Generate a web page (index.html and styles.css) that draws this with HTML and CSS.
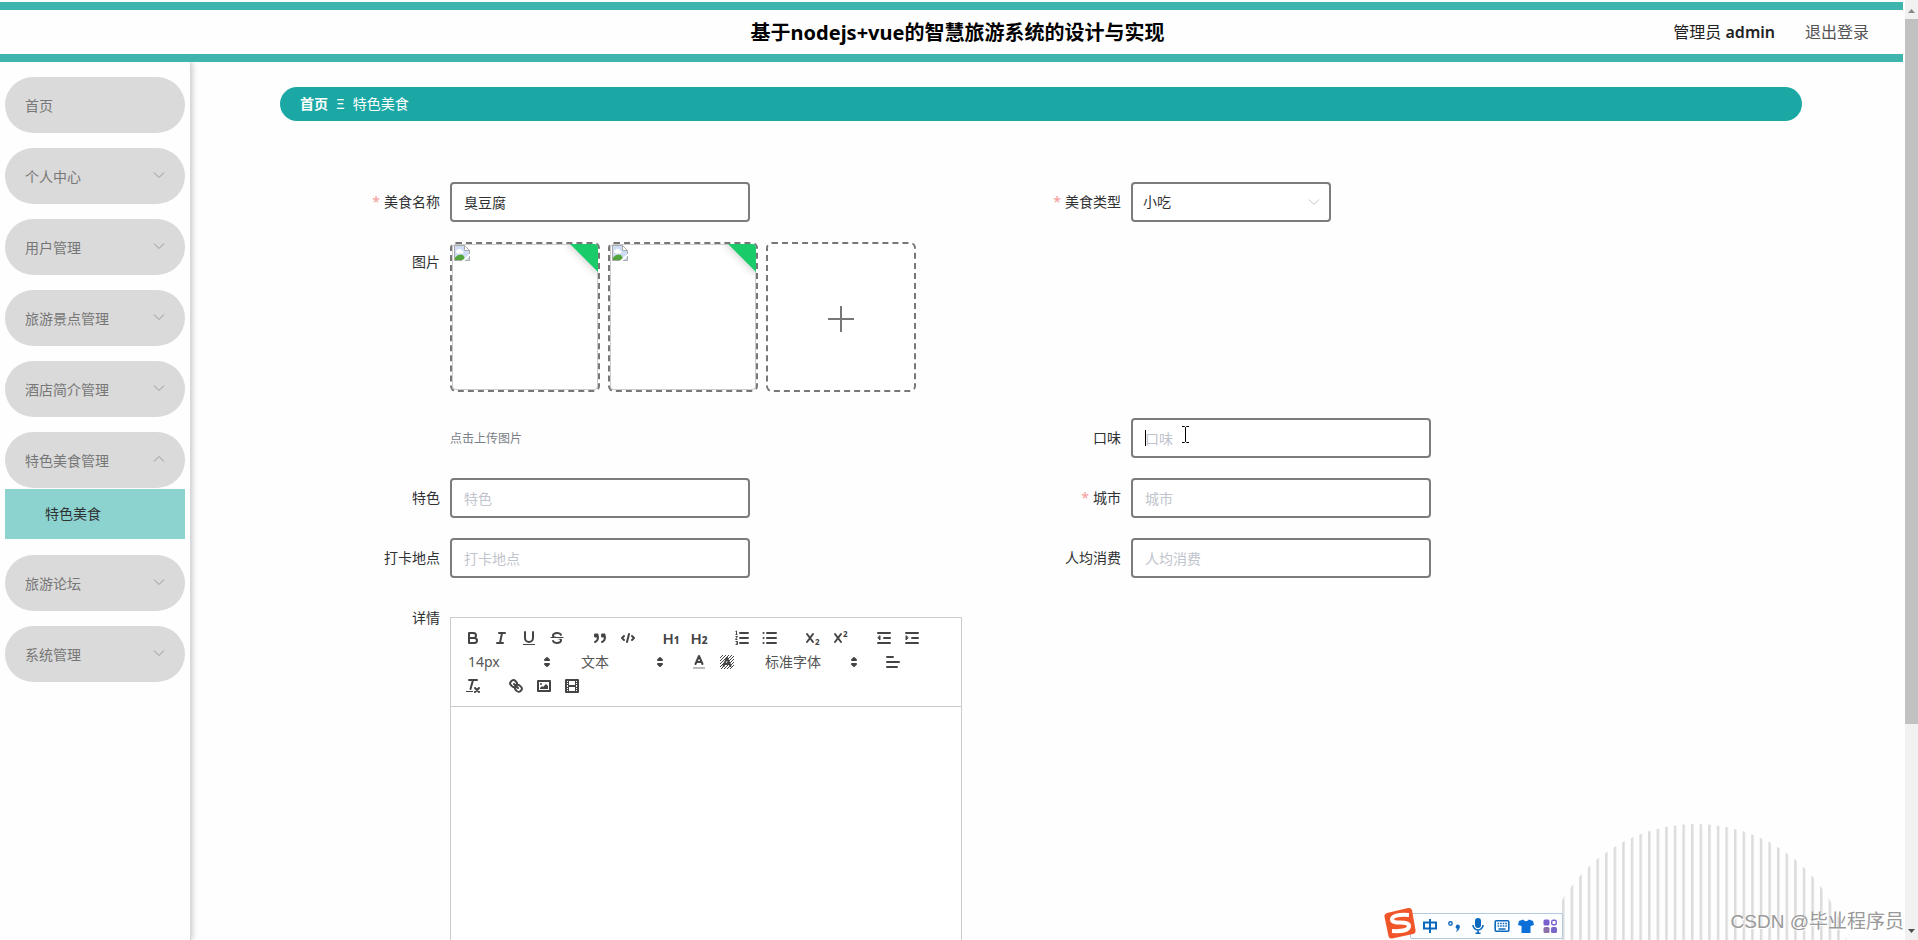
FILE: index.html
```
<!DOCTYPE html>
<html lang="zh-CN">
<head>
<meta charset="utf-8">
<title>基于nodejs+vue的智慧旅游系统的设计与实现</title>
<link rel="stylesheet" href="styles.css">
</head>
<body>
<svg class="defs" aria-hidden="true">
  <symbol id="down" viewBox="0 0 12 12"><path d="M1 3.5 6 8.500 11 3.500" fill="none" stroke="currentColor"/></symbol>
  <symbol id="updown" viewBox="0 0 18 18"><path class="fs" d="M7 11 9 13 11 11ZM7 7 9 5 11 7Z"/></symbol>
  <symbol id="broken" viewBox="0 0 16 16">
    <path d="M.5.5H10.500L15.500 5.500V15.500H.5Z" fill="#cfdcf5" stroke="#a9a9a9"/>
    <path d="M2 6.500a2 2 0 0 1 2-2 2.500 2.500 0 0 1 4 1 1.500 1.500 0 0 1 0 3H3.500A2 2 0 0 1 2 6.500Z" fill="#fff"/>
    <path d="M1 15 1 12.500Q5 8 9 10L12 15Z" fill="#54a63c"/>
    <path d="M10.500.5V5.500H15.500Z" fill="#fff" stroke="#a9a9a9"/>
    <path d="M7.500 16 16 8.500V10.500L10.500 16Z" fill="#fff"/>
  </symbol>
</svg>
<div class="app">
  <header class="header">
    <h1 class="title">基于nodejs+vue的智慧旅游系统的设计与实现</h1>
    <div class="account">
      <span class="user">管理员 <b>admin</b></span>
      <a class="logout" href="#">退出登录</a>
    </div>
  </header>
  <div class="body">
    <nav class="sidebar">
      <a class="item" href="#">首页</a>
      <button class="item" type="button">个人中心<svg class="chev"><use href="#down"/></svg></button>
      <button class="item" type="button">用户管理<svg class="chev"><use href="#down"/></svg></button>
      <button class="item" type="button">旅游景点管理<svg class="chev"><use href="#down"/></svg></button>
      <button class="item" type="button">酒店简介管理<svg class="chev"><use href="#down"/></svg></button>
      <div class="group">
        <button class="item open" type="button" aria-expanded="true">特色美食管理<svg class="chev"><use href="#down"/></svg></button>
        <a class="subitem" href="#">特色美食</a>
      </div>
      <button class="item" type="button">旅游论坛<svg class="chev"><use href="#down"/></svg></button>
      <button class="item" type="button">系统管理<svg class="chev"><use href="#down"/></svg></button>
    </nav>
    <main class="main">
      <div class="crumbs"><a href="#">首页</a><span class="sep">Ξ</span><span>特色美食</span></div>
      <form class="form">
        <div class="field">
          <label class="label required" for="name">美食名称</label>
          <input class="input" id="name" type="text" value="臭豆腐">
        </div>
        <div class="field">
          <label class="label required" for="type">美食类型</label>
          <div class="select">
            <select class="input" id="type"><option>小吃</option></select>
            <svg class="chev"><use href="#down"/></svg>
          </div>
        </div>
        <div class="field wide">
          <span class="label">图片</span>
          <div class="cards">
            <div class="card"><svg class="broken"><use href="#broken"/></svg></div>
            <div class="card"><svg class="broken"><use href="#broken"/></svg></div>
            <button class="card add" type="button" aria-label="上传"><svg class="plus" viewBox="0 0 28 28"><path d="M14 1V27M1 14H27"/></svg></button>
          </div>
        </div>
        <div class="field"><span class="label"></span><span class="tip">点击上传图片</span></div>
        <div class="field">
          <label class="label" for="taste">口味</label>
          <div class="focused">
            <input class="input" id="taste" type="text" placeholder="口味">
            <span class="caret"></span>
            <svg class="ibeam" viewBox="0 0 9 17"><path d="M1 .5H3.500L4.500 1.500 5.500.5H8M1 16.500H3.500L4.500 15.500 5.500 16.500H8M4.500 1.500V15.500"/></svg>
          </div>
        </div>
        <div class="field"><label class="label" for="feature">特色</label><input class="input" id="feature" type="text" placeholder="特色"></div>
        <div class="field"><label class="label required" for="city">城市</label><input class="input" id="city" type="text" placeholder="城市"></div>
        <div class="field"><label class="label" for="spot">打卡地点</label><input class="input" id="spot" type="text" placeholder="打卡地点"></div>
        <div class="field"><label class="label" for="cost">人均消费</label><input class="input" id="cost" type="text" placeholder="人均消费"></div>
        <div class="field wide">
          <span class="label" id="detail">详情</span>
          <div class="editor">
            <div class="toolbar">
              <div class="formats">
                <button class="tool" type="button" aria-label="加粗"><svg viewBox="0 0 18 18"><path d="M5 4H9.500A2.500 2.500 0 0 1 9.500 9H5ZM5 9H10.500A2.500 2.500 0 0 1 10.500 14H5Z"/></svg></button>
                <button class="tool" type="button" aria-label="斜体"><svg viewBox="0 0 18 18"><path d="M7 4H13M5 14H11M8 14 10 4"/></svg></button>
                <button class="tool" type="button" aria-label="下划线"><svg viewBox="0 0 18 18"><path d="M5 3V9a4 4 0 0 0 8 0V3"/><path class="f" d="M3 15H15V16H3Z"/></svg></button>
                <button class="tool" type="button" aria-label="删除线"><svg viewBox="0 0 18 18"><path class="t" d="M15.500 8.500H2.500"/><path class="f" d="M9 8C6.500 7.800 6 7.500 6 6.500 6 5.800 7.300 5 9 5c1.600 0 2.800.7 3 1.300a1 1 0 0 0 1.900-.6C13.400 4.100 11.400 3 9 3 6.200 3 4 4.500 4 6.500a3.200 3.200 0 0 0 .5 1.800ZM9 10c2.500.2 3 .5 3 1.500 0 .7-1.300 1.500-3 1.500-1.600 0-2.800-.7-3-1.300a1 1 0 1 0-1.900.6C4.600 13.900 6.600 15 9 15c2.800 0 5-1.500 5-3.500a3.200 3.200 0 0 0-.5-1.800Z"/></svg></button>
              </div>
              <div class="formats">
                <button class="tool" type="button" aria-label="引用"><svg viewBox="0 0 18 18"><path class="fs" d="M4 5H7V8H4ZM11 5H14V8H11Z"/><path d="M7 8c0 4-3 5-3 5M14 8c0 4-3 5-3 5"/></svg></button>
                <button class="tool" type="button" aria-label="代码"><svg viewBox="0 0 18 18"><path d="M5 7 3 9 5 11M13 7 15 9 13 11M10 5 8 13"/></svg></button>
              </div>
              <div class="formats">
                <button class="tool" type="button" aria-label="标题一"><span class="glyph">H<small>1</small></span></button>
                <button class="tool" type="button" aria-label="标题二"><span class="glyph">H<small>2</small></span></button>
              </div>
              <div class="formats">
                <button class="tool" type="button" aria-label="有序列表"><svg viewBox="0 0 18 18"><path d="M7 4H15M7 9H15M7 14H15"/><path class="t" d="M2.500 2.500 3.500 2V5.500M2.500 5.500H4.500M2.500 7.500H4.500L2.500 10.500H4.500M2.500 12.500H4.500V15.500H2.500M3 14H4.500"/></svg></button>
                <button class="tool" type="button" aria-label="无序列表"><svg viewBox="0 0 18 18"><path d="M6 4H15M6 9H15M6 14H15"/><path d="M2.500 4H2.600M2.500 9H2.600M2.500 14H2.600"/></svg></button>
              </div>
              <div class="formats">
                <button class="tool" type="button" aria-label="下标"><svg viewBox="0 0 18 18"><path d="M3 5 9 13M9 5 3 13"/><text x="11" y="16">2</text></svg></button>
                <button class="tool" type="button" aria-label="上标"><svg viewBox="0 0 18 18"><path d="M3 5 9 13M9 5 3 13"/><text x="11" y="8">2</text></svg></button>
              </div>
              <div class="formats">
                <button class="tool" type="button" aria-label="减少缩进"><svg viewBox="0 0 18 18"><path d="M3 4H15M3 14H15M9 9H15"/><path class="fs" d="M5 7V11L3 9Z"/></svg></button>
                <button class="tool" type="button" aria-label="增加缩进"><svg viewBox="0 0 18 18"><path d="M3 4H15M3 14H15M9 9H15"/><path class="fs" d="M3 7V11L5 9Z"/></svg></button>
              </div>
              <div class="formats"><div class="picker"><select aria-label="字号"><option>14px</option></select><svg class="arrows"><use href="#updown"/></svg></div></div>
              <div class="formats"><div class="picker"><select aria-label="段落"><option>文本</option></select><svg class="arrows"><use href="#updown"/></svg></div></div>
              <div class="formats">
                <button class="tool" type="button" aria-label="文字颜色"><svg viewBox="0 0 18 18"><path d="M5.500 11 9 3 12.500 11M6.400 9H11.600"/><path class="pale" d="M3 15H15"/></svg></button>
                <button class="tool" type="button" aria-label="背景颜色"><svg viewBox="0 0 18 18"><path class="t" d="M2 5 5 2M2 8 8 2M2 11 11 2M2 14 14 2M3 16 16 3M6 16 16 6M9 16 16 9M12 16 16 12"/><path d="M5.500 13 9 5 12.500 13M6.400 11H11.600"/></svg></button>
              </div>
              <div class="formats"><div class="picker font"><select aria-label="字体"><option>标准字体</option></select><svg class="arrows"><use href="#updown"/></svg></div></div>
              <div class="formats">
                <button class="tool" type="button" aria-label="对齐"><svg viewBox="0 0 18 18"><path d="M3 4H9M3 9H15M3 14H13"/></svg></button>
              </div>
              <div class="formats">
                <button class="tool" type="button" aria-label="清除格式"><svg viewBox="0 0 18 18"><path d="M5 3H13M6.500 12 9 3M11 11 15 15M15 11 11 15"/><path class="f" d="M2 14H9V15H2Z"/></svg></button>
              </div>
              <div class="formats">
                <button class="tool" type="button" aria-label="链接"><svg viewBox="0 0 18 18"><path d="M7 7 11 11M8.900 4.600a3.500 3.500 0 0 1 .4 4.700A3.500 3.500 0 0 1 4.600 8.900C3.200 7.500 2 6.400 4.200 4.200S7.500 3.200 8.900 4.600ZM13.400 9.100a3.500 3.500 0 0 0-4.700-.4 3.500 3.500 0 0 0 .4 4.700c1.400 1.400 2.500 2.500 4.700.4S14.800 10.500 13.400 9.100Z"/></svg></button>
                <button class="tool" type="button" aria-label="图片"><svg viewBox="0 0 18 18"><path d="M3 4H15V14H3Z"/><circle class="f" cx="6" cy="7" r="1"/><path class="f" d="M5 12V11L7 9 8 10 11 7 13 9V12Z"/></svg></button>
                <button class="tool" type="button" aria-label="视频"><svg viewBox="0 0 18 18"><path d="M3 3H15V15H3Z"/><path class="f" d="M5 3H6V15H5ZM12 3H13V15H12ZM5 8H13V10H5ZM3 5H6V6H3ZM3 7H6V8H3ZM3 10H6V11H3ZM3 12H6V13H3ZM12 5H15V6H12ZM12 7H15V8H12ZM12 10H15V11H12ZM12 12H15V13H12Z"/></svg></button>
              </div>
            </div>
            <div class="content" contenteditable="true" role="textbox" aria-labelledby="detail"></div>
          </div>
        </div>
      </form>
    </main>
  </div>
</div>
<div class="scrollbar" aria-hidden="true">
  <svg class="step" viewBox="0 0 13 17"><path d="M3 12 6.500 8 10 12Z" fill="#888"/></svg>
  <div class="thumb"></div>
  <svg class="step end" viewBox="0 0 13 17"><path d="M3 7 6.500 11 10 7Z" fill="#505050"/></svg>
</div>
<svg class="dome" viewBox="0 0 312 116" aria-hidden="true">
  <defs>
    <pattern id="bars" width="8.600" height="116" patternUnits="userSpaceOnUse" x="22"><rect width="2.500" height="116" fill="#dcdcdc"/></pattern>
    <clipPath id="round"><circle cx="156" cy="156" r="156"/></clipPath>
  </defs>
  <rect x="20" width="292" height="116" fill="url(#bars)" clip-path="url(#round)"/>
</svg>
<div class="ime">
  <svg class="sogou" viewBox="0 0 32 32"><path d="M3 6 24 1Q27 .5 28 3L31.500 23Q32 26 29 27L8 31.500Q5 32 4.500 29L.5 10Q0 7 3 6Z" fill="#f0562a"/><path d="M25 8Q8 7 8 12.500C8 18 25 13 25 19Q25 25 8 24" fill="none" stroke="#fff" stroke-width="4"/></svg>
  <div class="imebar">
    <svg viewBox="0 0 16 16"><path d="M2 4.500H14V10.500H2ZM8 1V15" fill="none" stroke="#0c68bd" stroke-width="2"/></svg>
    <svg viewBox="0 0 16 16"><circle cx="4.500" cy="5.500" r="1.700" fill="none" stroke="#0c68bd" stroke-width="1.400"/><path d="M10 8.500a1.800 1.800 0 1 1 3.300 1.200Q13 12 10.500 13.500 11.500 12 11.500 10.500A1.500 1.500 0 0 1 10 8.500Z" fill="#0c68bd" stroke="#0c68bd" stroke-width=".6"/></svg>
    <svg viewBox="0 0 16 16"><rect x="5" y="0" width="6" height="10" rx="3" fill="#0c68bd"/><path d="M3 7a5 5 0 0 0 10 0M8 12V16M5.500 15.200H10.500" fill="none" stroke="#0c68bd" stroke-width="1.600"/></svg>
    <svg viewBox="0 0 16 16"><rect x="1.200" y="2.700" width="13.600" height="10.600" rx="1" fill="none" stroke="#0c68bd" stroke-width="1.600"/><path d="M3.500 5.500H13M3.500 8H13" stroke="#0c68bd" stroke-width="1.600" stroke-dasharray="1.600 1"/><path d="M4.500 11H11.500" stroke="#0c68bd" stroke-width="1.500"/></svg>
    <svg viewBox="0 0 16 16"><path d="M1 3 5 1.500Q8 5 11 1.500L15 3 16 7 12.500 8V15H3.500V8L0 7Z" fill="#0a70d8"/></svg>
    <svg viewBox="0 0 16 16"><rect x="1.500" y="1.500" width="6" height="6" rx="1.500" fill="#7a5fd0"/><rect x="9.700" y="2.200" width="4.600" height="4.600" rx="1.500" fill="none" stroke="#7a5fd0" stroke-width="1.400"/><rect x="1.500" y="9" width="6" height="6" rx="1.500" fill="#8b6fa8"/><rect x="9" y="9" width="6" height="6" rx="1.500" fill="#7a68c8"/></svg>
  </div>
</div>
<div class="watermark">CSDN @毕业程序员</div>
</body>
</html>
```
FILE: styles.css
```
* { box-sizing: border-box; }
body {
  margin: 0;
  height: 100vh;
  display: flex;
  overflow: hidden;
  position: relative;
  background: #fefefe;
  color: #303133;
  font: 14px/20px "Noto Sans", "Noto Sans CJK SC", sans-serif;
}
button, input, select { font: inherit; color: inherit; }
a { color: inherit; text-decoration: none; }
.defs { position: absolute; width: 0; height: 0; }
.app { flex: 1; min-width: 0; display: flex; flex-direction: column; padding-top: 2px; margin-right: 2px; }

.header {
  position: relative;
  z-index: 1;
  flex: none;
  height: 60px;
  display: grid;
  grid-template-columns: 1fr auto 1fr;
  align-items: center;
  padding: 0 34px 0 46px;
  border: solid #3fb4ac;
  border-width: 8px 0;
  background: #fefefe;
}
.title { grid-column: 2; margin: 0; padding-top: 2px; font-size: 20px; line-height: 28px; color: #000; }
.account { display: flex; justify-content: flex-end; gap: 30px; font-size: 16px; line-height: 24px; }
.user { color: #222; }
.user b { font-weight: 600; }
.logout { color: #555; }

.body { flex: 1; min-height: 0; display: flex; }
.sidebar {
  flex: none;
  width: 191px;
  padding: 15px 5px;
  display: flex;
  flex-direction: column;
  gap: 15px;
  border-right: 1px solid #d8d8d8;
  box-shadow: 1px 0 6px rgba(0, 21, 41, .25);
}
.item {
  width: 100%;
  height: 56px;
  display: flex;
  align-items: center;
  justify-content: space-between;
  padding: 2px 20px 0;
  border: 0;
  border-radius: 30px;
  background: #dadada;
  color: #777;
  text-align: left;
}
.chev { width: 12px; height: 12px; color: #999; }
.item .chev { margin-bottom: 5px; }
.open .chev { transform: rotate(180deg); }
.group { padding-bottom: 1px; }
.subitem { display: block; margin-top: 1px; padding: 15px 40px; line-height: 20px; background: #8cd3cf; color: #303133; }

.main { flex: 1; min-width: 0; overflow: hidden; padding: 25px 101px 0 89px; }
.crumbs {
  display: flex;
  align-items: center;
  gap: 8px;
  height: 34px;
  padding: 0 20px;
  border-radius: 17px;
  background: #1ba8a5;
  color: #fff;
}
.crumbs a { font-weight: 700; }
.form {
  display: grid;
  grid-template-columns: 1fr 1fr;
  row-gap: 20px;
  padding: 61px 80px 0;
}
.field { display: flex; min-height: 40px; }
.wide { grid-column: 1 / -1; }
.label { flex: none; width: 90px; padding-right: 10px; line-height: 40px; text-align: right; }
.required::before { content: "*"; margin-right: 4px; color: #f59a9a; }
.input {
  width: 300px;
  height: 40px;
  padding: 0 12px;
  border: 2px solid #7c7c7c;
  border-radius: 4px;
  background: #fff;
  outline: 0;
}
.input::placeholder { color: #c0c4cc; opacity: 1; }
.select { position: relative; }
.select .input { width: 200px; padding: 0 10px; appearance: none; }
.select .chev { position: absolute; right: 11px; top: 14px; color: #c0c4cc; pointer-events: none; }
.focused { position: relative; height: 40px; }
.caret { position: absolute; left: 14px; top: 12px; width: 1px; height: 16px; background: #000; }
.ibeam { position: absolute; left: 50px; top: 8px; width: 9px; height: 17px; fill: none; stroke: #000; }
.tip { padding-top: 2px; font-size: 12px; line-height: 38px; color: #7a7f87; }

.cards { display: flex; gap: 8px; padding-bottom: 6px; }
.card {
  position: relative;
  width: 150px;
  height: 150px;
  padding: 0;
  overflow: hidden;
  border: 2px dashed #777;
  border-radius: 6px;
  background: #fff;
  box-shadow: inset 0 0 0 1px #ccc;
}
.card:not(.add)::after {
  content: "";
  position: absolute;
  right: -17px;
  top: -7px;
  width: 46px;
  height: 24px;
  background: #1acb6a;
  box-shadow: 0 1px 8px #ccc;
  transform: rotate(45deg);
}
.add { display: flex; align-items: center; justify-content: center; padding-top: 3px; box-shadow: none; }
.broken { position: absolute; left: 2px; top: 1px; width: 16px; height: 16px; }
.plus { width: 28px; height: 28px; stroke: #777; stroke-width: 2; }

.editor { width: 512px; margin-top: 19px; border: 1px solid #ccc; background: #fff; }
.toolbar { display: flex; flex-wrap: wrap; padding: 8px; border-bottom: 1px solid #ccc; }
.formats { display: flex; margin-right: 15px; }
.tool { width: 28px; height: 24px; padding: 3px 5px; border: 0; background: none; color: #444; }
.tool svg { display: block; width: 18px; height: 18px; }
.tool path, .fs { fill: none; stroke: #444; stroke-width: 2; stroke-linecap: round; stroke-linejoin: round; }
.tool .f, .tool .fs, .fs { fill: #444; }
.tool .f { stroke: none; }
.tool .fs { stroke-width: 1; }
.tool .t { stroke-width: 1; stroke-linecap: butt; }
.tool .pale { stroke: #bbb; stroke-linecap: butt; }
.tool text { font-size: 8px; font-weight: 700; fill: #444; }
.glyph { display: flex; align-items: baseline; justify-content: center; font-size: 15px; font-weight: 600; line-height: 18px; }
.glyph small { font-size: 10px; font-weight: 800; }
.picker { position: relative; width: 98px; height: 24px; color: #555; }
.font { width: 108px; }
.picker select { width: 100%; height: 24px; padding: 0 9px; border: 0; background: none; appearance: none; }
.arrows { position: absolute; right: 1px; top: 3px; width: 18px; height: 18px; pointer-events: none; }
.content { min-height: 300px; outline: 0; }

.scrollbar { flex: none; width: 13px; display: flex; flex-direction: column; background: #f1f1f1; }
.step { flex: none; width: 13px; height: 19px; }
.thumb { height: 75%; background: #c1c1c1; }
.end { margin-top: auto; }

.dome { position: absolute; right: 66px; bottom: 0; width: 312px; height: 116px; }
.ime { position: absolute; right: 355px; bottom: 1px; display: flex; align-items: flex-end; }
.sogou { position: relative; width: 32px; height: 32px; margin-right: -6px; }
.imebar {
  display: flex;
  align-items: center;
  gap: 8px;
  height: 26px;
  padding: 0 4px 0 11px;
  border: 1px solid #b4c9dc;
  border-radius: 2px;
  background: #fcfeff;
}
.imebar svg { width: 16px; height: 16px; }
.watermark {
  position: absolute;
  right: 14px;
  bottom: 5px;
  font: 19px/26px "Liberation Sans", "Noto Sans CJK SC", sans-serif;
  color: #999;
  text-shadow: 1px 1px 0 #fff;
}
```
